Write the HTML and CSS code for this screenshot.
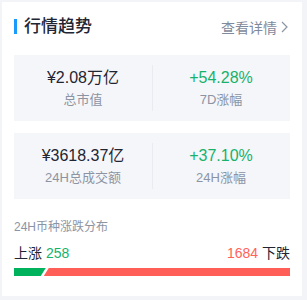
FILE: index.html
```html
<!DOCTYPE html>
<html lang="zh-CN">
<head>
    <meta charset="UTF-8">
    <meta name="viewport" content="width=device-width, initial-scale=1.0">
    <title>行情趋势</title>
    <link rel="stylesheet" href="styles.css">
</head>
<body>
    <div class="card">
        <div class="header">
            <h2 class="title">行情趋势</h2>
            <a class="more" href="#">查看详情
                <svg width="7" height="12" viewBox="0 0 7 12"><path d="M1 1 L6 6 L1 11" fill="none" stroke="#8c94a3" stroke-width="1.2"/></svg>
            </a>
        </div>
        <div class="panel">
            <div class="stat">
                <div class="value">¥2.08万亿</div>
                <div class="label">总市值</div>
            </div>
            <div class="stat">
                <div class="value up">+54.28%</div>
                <div class="label">7D涨幅</div>
            </div>
        </div>
        <div class="panel">
            <div class="stat">
                <div class="value">¥3618.37亿</div>
                <div class="label">24H总成交额</div>
            </div>
            <div class="stat">
                <div class="value up">+37.10%</div>
                <div class="label">24H涨幅</div>
            </div>
        </div>
        <div class="dist-title">24H币种涨跌分布</div>
        <div class="dist-row">
            <span>上涨 <em class="up">258</em></span>
            <span><em class="down">1684</em> 下跌</span>
        </div>
        <div class="bar">
            <div class="bar-up" style="width: 11.5%"></div>
            <div class="bar-down"></div>
        </div>
    </div>
</body>
</html>
```

FILE: styles.css
```css
body {
    margin: 0;
    padding: 2px 0 0 2px;
    background: #f3f4f8;
    font-family: "Liberation Sans", "Noto Sans CJK SC", sans-serif;
}
.card {
    background: #fff;
    width: 300px;
    height: 294px;
    box-sizing: border-box;
    padding: 12px 12px 20px;
}
.header {
    display: flex;
    justify-content: space-between;
    align-items: center;
    height: 25px;
    margin-bottom: 16px;
}
.title {
    margin: 0;
    font-size: 17px;
    font-weight: 500;
    color: #1f2533;
    border-left: 3px solid #1a9bfc;
    padding-left: 7px;
    line-height: 15px;
    height: 15px;
    display: flex;
    align-items: center;
}
.more {
    color: #7f8a9c;
    font-size: 14px;
    text-decoration: none;
    display: flex;
    align-items: center;
    gap: 4px;
    padding-right: 2px;
}
.panel {
    background: #f5f6fa;
    display: flex;
    padding: 12px 0;
    margin-bottom: 12px;
    position: relative;
}
.panel::after {
    content: "";
    position: absolute;
    left: 50%;
    top: 10px;
    bottom: 10px;
    width: 1px;
    background: #e9ebf0;
}
.stat {
    flex: 1;
    text-align: center;
}
.value {
    font-size: 16px;
    line-height: 22px;
    color: #1f2533;
}
.label {
    margin-top: 2px;
    font-size: 13px;
    line-height: 18px;
    color: #8c94a3;
}
.up {
    color: #17b26a;
}
.down {
    color: #ff625c;
}
em {
    font-style: normal;
}
.dist-title {
    margin-top: 19px;
    font-size: 12px;
    line-height: 18px;
    color: #8c94a3;
}
.dist-row {
    margin-top: 7px;
    display: flex;
    justify-content: space-between;
    font-size: 14px;
    line-height: 20px;
    color: #1f2533;
}
.bar {
    margin-top: 5px;
    display: flex;
    height: 8px;
}
.bar-up {
    background: #00b25b;
    clip-path: polygon(0 0, 100% 0, calc(100% - 5px) 100%, 0 100%);
}
.bar-down {
    flex: 1;
    margin-left: -2px;
    background: #ff5f57;
    clip-path: polygon(5px 0, 100% 0, 100% 100%, 0 100%);
}
```
